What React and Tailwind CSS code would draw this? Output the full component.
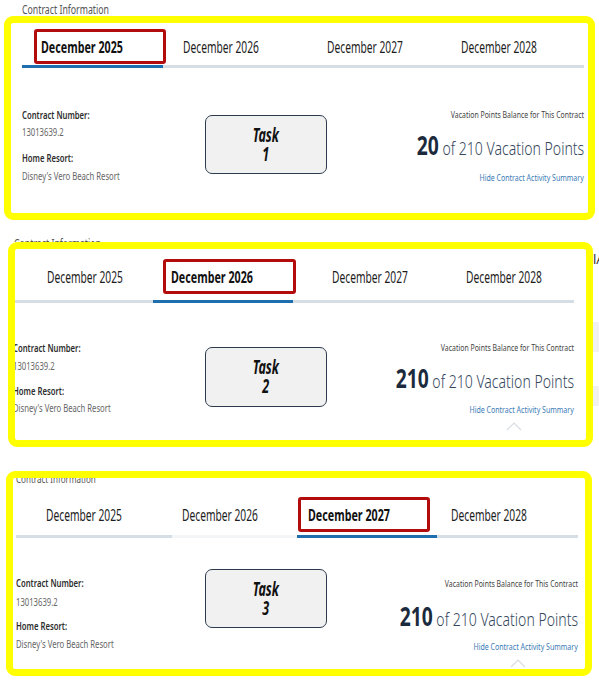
import React from 'react';

const LINE_ON = 'border-[#1f6fae]';
const LINE_OFF = 'border-[#d5dee5]';

// the screenshot text is narrow; squeeze it horizontally
const Sq = ({ className, children }) => (
  <span className={`inline-block whitespace-nowrap ${className}`}>{children}</span>
);

const Tabs = ({ tabs, rowClass }) => (
  <div className={`flex ${rowClass}`}>
    {tabs.map((t) => (
      <div key={t.label} className={`shrink-0 border-b-[3px] ${t.cls}`}>
        <div
          className={`flex h-[35px] items-center whitespace-nowrap rounded-[3px] border-[3px] text-[16px] leading-none ${
            t.selected
              ? 'border-[#b30c0c] font-bold text-[#111]'
              : 'border-transparent text-[#1c1c1c]'
          } ${t.box}`}
        >
          {t.selected ? (
            <Sq className="origin-left scale-x-[0.67]">{t.label}</Sq>
          ) : (
            <Sq className="origin-left scale-x-[0.64]">{t.label}</Sq>
          )}
        </div>
      </div>
    ))}
  </div>
);

const Chevron = ({ className }) => (
  <svg className={className} width="16" height="9" viewBox="0 0 16 9" aria-hidden>
    <polyline points="1,8 8,1 15,8" fill="none" stroke="#d6dce2" strokeWidth="1.2" />
  </svg>
);

const Body = ({ bodyCls, leftCls, gaps, taskCls, task, rightCls, rGaps, points, chevron }) => (
  <div className={`flex items-start ${bodyCls}`}>
    <div className={`shrink-0 ${leftCls}`}>
      <p className="h-[14px] text-[11px] font-semibold leading-[14px] text-[#2d2d2d]">
        <Sq className="origin-left scale-x-[0.7]">Contract Number:</Sq>
      </p>
      <p className={`h-[14px] text-[10px] leading-[14px] text-[#666] ${gaps[0]}`}>
        <Sq className="origin-left scale-x-[0.77]">13013639.2</Sq>
      </p>
      <p className={`h-[14px] text-[11px] font-semibold leading-[14px] text-[#2d2d2d] ${gaps[1]}`}>
        <Sq className="origin-left scale-x-[0.7]">Home Resort:</Sq>
      </p>
      <p className={`h-[14px] text-[10px] leading-[14px] text-[#666] ${gaps[2]}`}>
        <Sq className="origin-left scale-x-[0.77]">Disney's Vero Beach Resort</Sq>
      </p>
    </div>
    <div
      className={`flex w-[122px] shrink-0 items-center justify-center rounded-[7px] border border-[#2e3b4e] bg-[#f1f1f1] text-[19px] font-bold italic leading-[19px] text-[#111] ${taskCls}`}
    >
      <Sq className="origin-center scale-x-[0.66] text-center">
        Task
        <br />
        {task}
      </Sq>
    </div>
    <div className={`flex flex-1 flex-col items-end ${rightCls}`}>
      <p className="h-[14px] text-[9px] leading-[14px] text-[#444]">
        <Sq className="origin-right scale-x-[0.77]">Vacation Points Balance for This Contract</Sq>
      </p>
      <p className={`h-[32px] leading-[32px] text-[#1b2a3d] ${rGaps[0]}`}>
        <Sq className="origin-right scale-x-[0.74]">
          <span className="text-[26px] font-bold">{points}</span>
          <span className="text-[19px] font-light text-[#34475c]"> of 210 Vacation Points</span>
        </Sq>
      </p>
      <p className={`h-[14px] text-[9px] leading-[14px] text-[#3b7bb5] ${rGaps[1]}`}>
        <Sq className="origin-right scale-x-[0.78]">Hide Contract Activity Summary</Sq>
      </p>
      {chevron}
    </div>
  </div>
);

const FRAME = 'shrink-0 overflow-hidden rounded-[9px] border-[7px] border-[#ffff00] bg-white';

export default function App() {
  return (
    <div className="h-[684px] w-[599px] overflow-hidden bg-white font-['Noto_Sans','Open_Sans',sans-serif]">
      <div className="h-[16px] pl-[22px] pt-[3px] text-[12px] leading-[13px] text-[#555]">
        <Sq className="origin-left scale-x-[0.73]">Contract Information</Sq>
      </div>

      {/* Task 1 */}
      <div className={`ml-[4px] h-[204px] w-[591px] ${FRAME}`}>
        <Tabs
          rowClass="ml-[11px]"
          tabs={[
            { label: 'December 2025', selected: true, cls: `w-[141px] pl-[12px] pt-[6px] pb-[1px] ${LINE_ON}`, box: 'w-[132px] pl-[4px]' },
            { label: 'December 2026', cls: `w-[141px] pl-[13px] pt-[6px] pb-[1px] ${LINE_OFF}`, box: 'pl-[4px]' },
            { label: 'December 2027', cls: `w-[141px] pl-[16px] pt-[6px] pb-[1px] ${LINE_OFF}`, box: 'pl-[4px]' },
            { label: 'December 2028', cls: `w-[139px] pl-[9px] pt-[6px] pb-[1px] ${LINE_OFF}`, box: 'pl-[4px]' },
          ]}
        />
        <Body
          bodyCls="pl-[11px] pr-[4px] pt-[40px]"
          leftCls="w-[183px]"
          gaps={['mt-[3px]', 'mt-[12px]', 'mt-[4px]']}
          taskCls="mt-[7px] h-[59px]"
          task="1"
          rightCls=""
          rGaps={['mt-[7px]', 'mt-[10px]']}
          points="20"
        />
      </div>

      <div className="h-[22px] overflow-hidden pl-[14px] pt-[17px] text-[12px] leading-[13px] text-[#555]">
        <Sq className="origin-left scale-x-[0.73]">Contract Information</Sq>
      </div>

      {/* Task 2 */}
      <div className="flex">
        <div className={`ml-[8px] h-[205px] w-[585px] ${FRAME}`}>
          <Tabs
            rowClass=""
            tabs={[
              { label: 'December 2025', cls: `w-[138px] pl-[25px] pt-[10px] pb-[6px] ${LINE_OFF}`, box: 'pl-[4px]' },
              { label: 'December 2026', selected: true, cls: `w-[140px] pl-[10px] pt-[10px] pb-[6px] ${LINE_ON}`, box: 'w-[133px] pl-[5px]' },
              { label: 'December 2027', cls: `w-[140px] pl-[32px] pt-[10px] pb-[6px] ${LINE_OFF}`, box: 'pl-[4px]' },
              { label: 'December 2028', cls: `w-[141px] pl-[26px] pt-[10px] pb-[6px] ${LINE_OFF}`, box: 'pl-[4px]' },
            ]}
          />
          <Body
            bodyCls="-ml-[2px] pr-[12px] pt-[38px]"
            leftCls="w-[192px]"
            gaps={['mt-[4px]', 'mt-[11px]', 'mt-[3px]']}
            taskCls="mt-[6px] h-[60px]"
            task="2"
            rightCls=""
            rGaps={['mt-[7px]', 'mt-[9px]']}
            points="210"
            chevron={<Chevron className="mr-[52px] mt-[5px]" />}
          />
        </div>
        <div className="flex w-[6px] flex-col overflow-hidden">
          <span className="mt-[10px] whitespace-nowrap text-[13px] leading-[14px] text-[#333]">lA</span>
          <span className="mt-[56px] h-[30px] bg-[#f1f1f1]" />
          <span className="mt-[34px] h-[20px] bg-[#f1f1f1]" />
        </div>
      </div>

      <div className="h-[24px]" />

      {/* Task 3 */}
      <div className={`ml-[6px] h-[205px] w-[586px] ${FRAME}`}>
        <div className="-mt-[5px] h-[11px] pl-[3px] text-[11px] leading-[11px] text-[#555]">
          <Sq className="origin-left scale-x-[0.73]">Contract Information</Sq>
        </div>
        <Tabs
          rowClass="ml-[3px]"
          tabs={[
            { label: 'December 2025', cls: `w-[156px] pl-[23px] pt-[13px] pb-[3px] ${LINE_OFF}`, box: 'pl-[4px]' },
            { label: 'December 2026', cls: 'w-[125px] pl-[3px] pt-[13px] pb-[3px] border-[#f3f5f7]', box: 'pl-[4px]' },
            { label: 'December 2027', selected: true, cls: `w-[140px] pl-[1px] pt-[13px] pb-[3px] ${LINE_ON}`, box: 'w-[132px] pl-[7px]' },
            { label: 'December 2028', cls: `w-[141px] pl-[7px] pt-[13px] pb-[3px] ${LINE_OFF}`, box: 'pl-[4px]' },
          ]}
        />
        <Body
          bodyCls="pl-[3px] pr-[7px] pt-[31px]"
          leftCls="mt-[7px] w-[189px]"
          gaps={['mt-[5px]', 'mt-[10px]', 'mt-[4px]']}
          taskCls="h-[59px]"
          task="3"
          rightCls="mt-[8px]"
          rGaps={['mt-[9px]', 'mt-[8px]']}
          points="210"
          chevron={<Chevron className="mr-[52px] mt-[5px]" />}
        />
      </div>
    </div>
  );
}
